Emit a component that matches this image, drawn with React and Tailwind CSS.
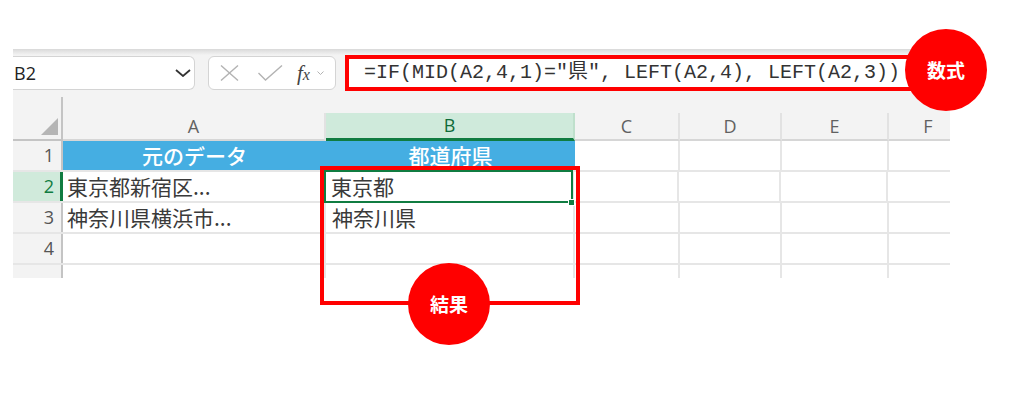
export default function App() {
  const jp = { fontFamily: '"Noto Sans CJK JP", "Noto Sans", sans-serif' };
  const ui = { fontFamily: '"Open Sans", "Noto Sans", sans-serif' };
  const rowHead =
    "w-[50px] shrink-0 h-full flex items-center justify-end pr-[7px] text-[18px] text-[#555] border-r-2 border-[#c4c4c4] bg-[#f3f3f3]";
  const cell = "h-full shrink-0 border-r-2 border-[#e6e6e6]";
  return (
    <div className="relative w-[1024px] h-[394px] bg-white overflow-hidden">
      <div className="ml-[13px] mt-[49px] w-[937px] h-[229px] overflow-hidden bg-[#f3f3f3] flex flex-col">
        {/* shadow */}
        <div className="h-[6px] shrink-0 bg-gradient-to-b from-[#d9d9d9] to-[#f3f3f3]" />
        {/* toolbar */}
        <div className="h-[42px] shrink-0 pt-[1px] flex items-start">
          <div
            className="w-[182px] h-[34px] bg-white border border-l-0 border-[#d4d4d4] rounded-r-[6px] flex items-center justify-between pl-[1px] pr-[3px]"
            style={ui}
          >
            <span className="text-[18px] text-[#222] leading-none">B2</span>
            <svg width="16" height="8" viewBox="0 0 16 8">
              <path d="M1 1L8 7L15 1" fill="none" stroke="#333" strokeWidth="1.8" />
            </svg>
          </div>
          <div className="ml-[13px] w-[128px] h-[34px] bg-white border border-[#d4d4d4] rounded-[6px] flex items-center pl-[11px]">
            <svg width="19" height="16" viewBox="0 0 19 16">
              <path d="M1 0.5L18 15.5M18 0.5L1 15.5" fill="none" stroke="#b3b3b3" strokeWidth="1.4" />
            </svg>
            <svg className="ml-[19px]" width="25" height="16" viewBox="0 0 25 16">
              <path d="M0.5 8L7.5 15L24 0.5" fill="none" stroke="#b3b3b3" strokeWidth="1.4" />
            </svg>
            <span
              className="ml-[14px] text-[#444] italic leading-none"
              style={{ fontFamily: '"Liberation Serif", serif' }}
            >
              <span className="text-[21px]">f</span>
              <span className="text-[16px]">x</span>
            </span>
            <svg className="ml-[7px]" width="7" height="4" viewBox="0 0 7 4">
              <path d="M0.5 0.5L3.5 3.5L6.5 0.5" fill="none" stroke="#b3b3b3" strokeWidth="1" />
            </svg>
          </div>
          <div className="ml-[9px] flex-1 h-[34px] bg-white border border-[#d4d4d4] flex items-center pl-[18px]">
            <span
              className="text-[20px] text-[#333] whitespace-pre leading-none"
              style={{ fontFamily: '"Liberation Mono", "Noto Sans CJK JP", monospace' }}
            >
              =IF(MID(A2,4,1)="県", LEFT(A2,4), LEFT(A2,3))
            </span>
          </div>
        </div>
        {/* column headers */}
        <div className="h-[44px] shrink-0 flex text-[18px] text-[#616161]" style={ui}>
          <div className="w-[50px] shrink-0 h-full border-r-2 border-b-2 border-[#c4c4c4] flex items-end justify-end pr-[3px] pb-[4px]">
            <svg width="17" height="17" viewBox="0 0 17 17">
              <path d="M17 0L17 17L0 17Z" fill="#b5b5b5" />
            </svg>
          </div>
          {[
            ["A", "w-[263px]"],
            ["B", "w-[249px]"],
            ["C", "w-[105px]"],
            ["D", "w-[102px]"],
            ["E", "w-[107px]"],
            ["F", "w-[80px]"],
          ].map(([l, w]) => (
            <div key={l} className={`${w} shrink-0 h-full flex flex-col justify-end`}>
              {l === "B" ? (
                <div className="h-[28px] bg-[#cfeadb] border-b-[3px] border-[#107c41] border-r-2 border-r-[#bfe0cc] flex items-center justify-center text-[#0f6b38]">
                  B
                </div>
              ) : (
                <div className="h-[28px] border-b-2 border-[#d6d6d6] border-r-2 border-r-[#e2e2e2] flex items-center justify-center">
                  {l}
                </div>
              )}
            </div>
          ))}
        </div>
        {/* row 1 */}
        <div className="h-[31px] shrink-0 flex border-b-2 border-[#e6e6e6] bg-white">
          <div className={rowHead} style={ui}>1</div>
          <div
            className="w-[512px] shrink-0 h-full flex bg-[#45aee2] text-white text-[21px] font-medium"
            style={jp}
          >
            <div className="w-[263px] flex items-center justify-center leading-none">元のデータ</div>
            <div className="w-[249px] flex items-center justify-center leading-none">都道府県</div>
          </div>
          <div className={`${cell} w-[105px]`} />
          <div className={`${cell} w-[102px]`} />
          <div className={`${cell} w-[107px]`} />
          <div className={`${cell} w-[80px]`} />
        </div>
        {/* row 2 */}
        <div className="h-[31px] shrink-0 flex border-b-2 border-[#e6e6e6] bg-white">
          <div
            className="w-[50px] shrink-0 h-full flex items-center justify-end pr-[6px] text-[18px] text-[#107c41] border-r-[3px] border-[#107c41] bg-[#d0eadb]"
            style={ui}
          >
            2
          </div>
          <div
            className={`${cell} w-[262px] flex items-center pl-[4px] text-[21px] text-[#3a3a3a] leading-none`}
            style={jp}
          >
            東京都新宿区...
          </div>
          <div
            className={`${cell} relative w-[249px] flex items-center pl-[6px] text-[21px] text-[#3a3a3a] leading-none`}
            style={jp}
          >
            東京都
            <div className="absolute left-[-1px] right-[-1px] top-[-2px] bottom-[-2px] border-2 border-[#107c41]" />
            <div className="absolute right-[-3px] bottom-[-5px] w-[7px] h-[7px] bg-[#107c41] border border-white" />
          </div>
          <div className={`${cell} w-[105px]`} />
          <div className={`${cell} w-[102px]`} />
          <div className={`${cell} w-[107px]`} />
          <div className={`${cell} w-[80px]`} />
        </div>
        {/* row 3 */}
        <div className="h-[31px] shrink-0 flex border-b-2 border-[#e6e6e6] bg-white">
          <div className={rowHead} style={ui}>3</div>
          <div
            className={`${cell} w-[263px] flex items-center pl-[4px] text-[21px] text-[#3a3a3a] leading-none`}
            style={jp}
          >
            神奈川県横浜市...
          </div>
          <div
            className={`${cell} w-[249px] flex items-center pl-[6px] text-[21px] text-[#3a3a3a] leading-none`}
            style={jp}
          >
            神奈川県
          </div>
          <div className={`${cell} w-[105px]`} />
          <div className={`${cell} w-[102px]`} />
          <div className={`${cell} w-[107px]`} />
          <div className={`${cell} w-[80px]`} />
        </div>
        {/* row 4 */}
        <div className="h-[31px] shrink-0 flex border-b-2 border-[#e6e6e6] bg-white">
          <div className={rowHead} style={ui}>4</div>
          <div className={`${cell} w-[263px]`} />
          <div className={`${cell} w-[249px]`} />
          <div className={`${cell} w-[105px]`} />
          <div className={`${cell} w-[102px]`} />
          <div className={`${cell} w-[107px]`} />
          <div className={`${cell} w-[80px]`} />
        </div>
        {/* row 5 */}
        <div className="h-[31px] shrink-0 flex bg-white">
          <div className="w-[50px] shrink-0 h-full flex items-start justify-end pr-[7px] pt-[6px] text-[18px] text-[#555] border-r-2 border-[#c4c4c4] bg-[#f3f3f3]" style={ui}>5</div>
          <div className={`${cell} w-[263px]`} />
          <div className={`${cell} w-[249px]`} />
          <div className={`${cell} w-[105px]`} />
          <div className={`${cell} w-[102px]`} />
          <div className={`${cell} w-[107px]`} />
          <div className={`${cell} w-[80px]`} />
        </div>
      </div>

      {/* annotations */}
      <div className="absolute left-[345px] top-[55px] w-[575px] h-[36px] border-4 border-[#ff0000]" />
      <div
        className="absolute left-[905px] top-[29px] w-[82px] h-[82px] rounded-full bg-[#ff0000] flex items-center justify-center text-white text-[19px] font-bold"
        style={jp}
      >
        数式
      </div>
      <div className="absolute left-[320px] top-[166px] w-[260px] h-[139px] border-4 border-[#ff0000]" />
      <div
        className="absolute left-[408px] top-[263px] w-[82px] h-[82px] rounded-full bg-[#ff0000] flex items-center justify-center text-white text-[19px] font-bold"
        style={jp}
      >
        結果
      </div>
    </div>
  );
}
